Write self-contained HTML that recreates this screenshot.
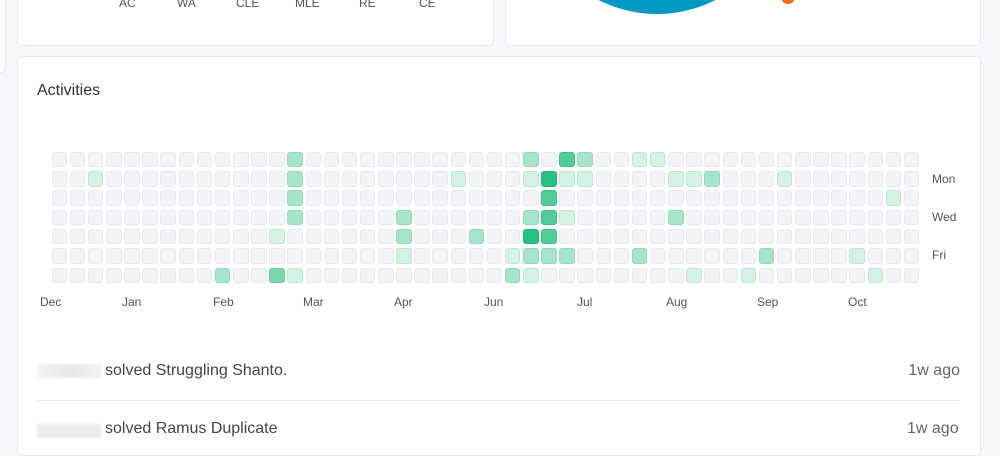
<!DOCTYPE html>
<html><head><meta charset="utf-8"><style>
html,body{margin:0;padding:0;}
body{width:1000px;height:428px;overflow:hidden;background:#f5f7fa;position:relative;font-family:"Liberation Sans",sans-serif;color:#333;}
.card{position:absolute;background:#fff;border:1px solid #e6e9ee;border-radius:5px;box-sizing:border-box;}
.lbl{position:absolute;font-size:12px;color:#555;}
.c{position:absolute;width:15.5px;height:15.5px;box-sizing:border-box;border-radius:3px;background:#f3f4f8;border:1px solid #e8eaef;}
.l1{background:#d5f2e5;border-color:#b8eacf;}
.l2{background:#a6e5cb;border-color:#8fdcb9;}
.l3{background:#52cc98;border-color:#40bf88;}
.l4{background:#26c281;border-color:#22b577;}
.l5{background:#7ad8ae;border-color:#62cf9c;}
</style></head><body>
<div class="card" style="left:-10px;top:-10px;width:16px;height:83px;"></div>
<div class="card" style="left:17px;top:-10px;width:477px;height:56px;"></div>
<div class="lbl" style="left:119px;top:-4px;">AC</div>
<div class="lbl" style="left:177px;top:-4px;">WA</div>
<div class="lbl" style="left:236px;top:-4px;">CLE</div>
<div class="lbl" style="left:295px;top:-4px;">MLE</div>
<div class="lbl" style="left:359px;top:-4px;">RE</div>
<div class="lbl" style="left:419px;top:-4px;">CE</div>
<div class="card" style="left:505px;top:-10px;width:476px;height:56px;overflow:hidden;">
<div style="position:absolute;left:22px;top:-235px;width:258px;height:258px;border-radius:50%;background:#0099c3;"></div>
<div style="position:absolute;left:275px;top:-1px;width:14px;height:14px;border-radius:50%;background:#ff6a13;"></div>
</div>
<div class="card" style="left:17px;top:56px;width:964px;height:400px;"></div>
<div style="position:absolute;left:37px;top:82px;font-size:16px;color:#333;">Activities</div>
<div id="g"></div>
<div class="lbl" style="left:40px;top:295px;">Dec</div>
<div class="lbl" style="left:122px;top:295px;">Jan</div>
<div class="lbl" style="left:213px;top:295px;">Feb</div>
<div class="lbl" style="left:303px;top:295px;">Mar</div>
<div class="lbl" style="left:394px;top:295px;">Apr</div>
<div class="lbl" style="left:484px;top:295px;">Jun</div>
<div class="lbl" style="left:577px;top:295px;">Jul</div>
<div class="lbl" style="left:666px;top:295px;">Aug</div>
<div class="lbl" style="left:757px;top:295px;">Sep</div>
<div class="lbl" style="left:848px;top:295px;">Oct</div>
<div class="lbl" style="left:932px;top:172px;">Mon</div>
<div class="lbl" style="left:932px;top:210px;">Wed</div>
<div class="lbl" style="left:932px;top:248px;">Fri</div>
<div style="position:absolute;left:37px;top:364px;width:64px;height:14px;background:linear-gradient(90deg,#f4f4f4,#e8e8e8,#f2f2f2);filter:blur(1px);"></div>
<div style="position:absolute;left:105px;top:362px;font-size:16px;color:#444;">solved Struggling Shanto.</div>
<div style="position:absolute;right:40px;top:362px;font-size:16px;color:#666;">1w ago</div>
<div style="position:absolute;left:37px;top:400px;width:923px;height:1px;background:#eceef1;"></div>
<div style="position:absolute;left:37px;top:424px;width:64px;height:14px;background:#ececec;filter:blur(1px);"></div>
<div style="position:absolute;left:105px;top:420px;font-size:16px;color:#444;">solved Ramus Duplicate</div>
<div style="position:absolute;left:907px;top:420px;font-size:16px;color:#666;">1w ago</div>
<script>
var lv={"13,0":2,"13,1":2,"13,2":2,"13,3":2,"2,1":1,"12,4":1,"12,6":5,"9,6":2,"13,6":1,
"26,0":2,"26,1":1,"26,3":2,"26,4":4,"26,5":2,"26,6":1,
"27,1":4,"27,2":3,"27,3":3,"27,4":3,"27,5":2,
"28,0":3,"28,1":1,"28,3":1,"28,5":2,"29,0":2,"29,1":1,
"22,1":1,"19,3":2,"19,4":2,"19,5":1,"23,4":2,"25,5":1,"25,6":2,
"32,0":1,"32,5":2,"33,0":1,"34,1":1,"34,3":2,"35,1":1,"35,6":1,"36,1":2,
"38,6":1,"39,5":2,"40,1":1,"44,5":1,"45,6":1,"46,2":1};
var h="";
for(var c=0;c<48;c++)for(var r=0;r<7;r++){var k=lv[c+","+r];
h+='<div class="c'+(k?' l'+k:'')+'" style="left:'+(51.7+c*18.13).toFixed(2)+'px;top:'+(151.7+r*19.3).toFixed(2)+'px"></div>';}
document.getElementById("g").innerHTML=h;
</script>
</body></html>
